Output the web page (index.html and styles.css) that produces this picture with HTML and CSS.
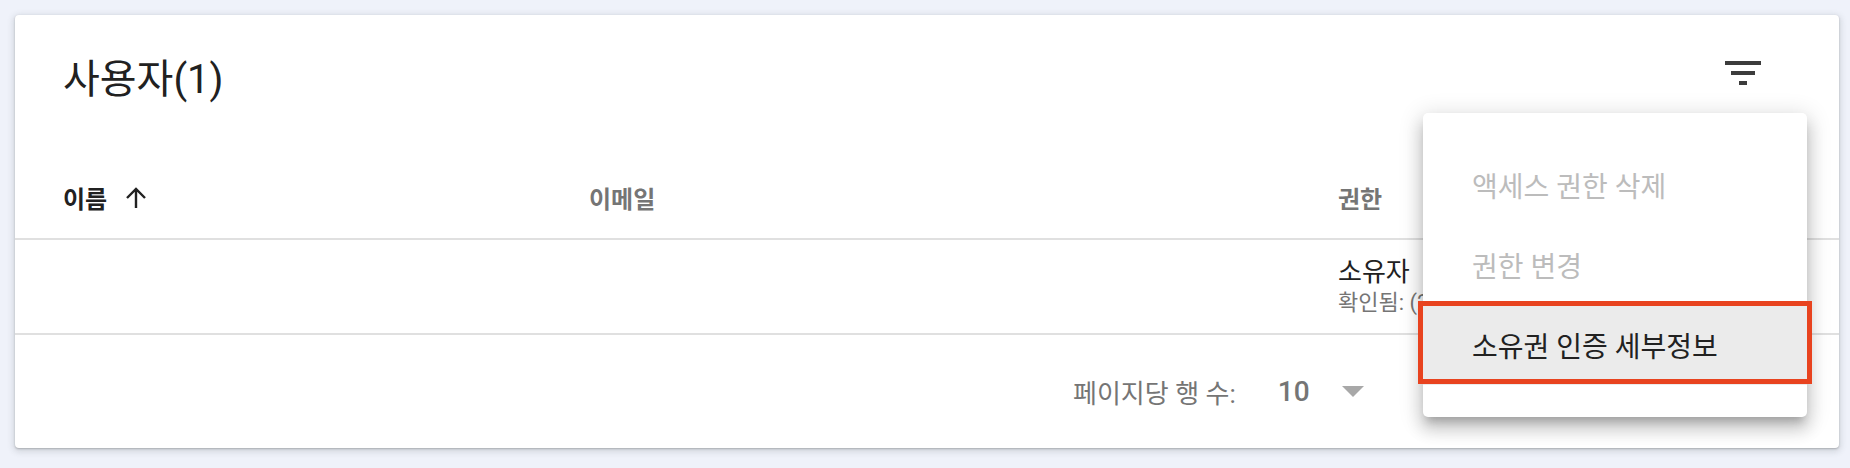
FILE: index.html
```html
<!DOCTYPE html>
<html lang="ko">
<head>
<meta charset="utf-8">
<title>사용자</title>
<link rel="stylesheet" href="styles.css">
</head>
<body>
<div class="card">
  <div class="title-row">
    <h1 class="title">사용자(1)</h1>
    <button class="filter-btn" aria-label="필터">
      <svg viewBox="0 0 24 24" width="48" height="48"><rect x="3" y="6" width="18" height="2"/><rect x="6" y="11" width="12" height="2"/><rect x="10" y="16" width="4" height="2"/></svg>
    </button>
  </div>
  <div class="table">
    <div class="row head">
      <div class="cell sorted">이름 <svg class="sort" viewBox="0 0 22 22" width="22" height="22"><path d="M11 21V2M2 11l9-9 9 9"/></svg></div>
      <div class="cell">이메일</div>
      <div class="cell">권한</div>
    </div>
    <div class="row body">
      <div class="cell"></div>
      <div class="cell"></div>
      <div class="cell">
        <div class="role">소유자</div>
        <div class="verified">확인됨: (2023. 1. 1.)</div>
      </div>
    </div>
  </div>
  <div class="footer">
    <span class="per-page">페이지당 행 수:</span>
    <span class="count">10</span>
    <span class="caret"></span>
  </div>
  <div class="menu">
    <div class="item disabled">액세스 권한 삭제</div>
    <div class="item disabled">권한 변경</div>
    <div class="item active">소유권 인증 세부정보<span class="mark"></span></div>
  </div>
</div>
</body>
</html>
```
FILE: styles.css
```css
* { box-sizing: border-box; }
html, body { margin: 0; padding: 0; }
body {
  background: #eff2fa;
  font-family: Roboto, "Noto Sans CJK KR", sans-serif;
  color: #212121;
  width: 1850px;
  height: 468px;
  overflow: hidden;
}
.card {
  position: relative;
  margin: 15px 0 0 15px;
  width: 1824px;
  height: 433px;
  background: #fff;
  border-radius: 4px;
  box-shadow: 0 1px 2px rgba(60,64,67,.3), 0 2px 6px 2px rgba(60,64,67,.15);
}
.title-row {
  display: flex;
  justify-content: space-between;
  align-items: flex-start;
  padding: 34px 72px 52px 48px;
}
.title {
  margin: 6px 0 0 0;
  font-size: 40px;
  line-height: 50px;
  font-weight: 400;
  color: #212121;
}
.filter-btn {
  width: 48px;
  height: 48px;
  padding: 0;
  border: 0;
  background: none;
}
.filter-btn svg { display: block; fill: #3c3c3c; }
.row {
  display: grid;
  grid-template-columns: 526px 749px 1fr;
  padding-left: 48px;
  border-bottom: 2px solid #e0e0e0;
}
.row.head {
  height: 83px;
  align-items: center;
  font-size: 24px;
  font-weight: 700;
  color: #757575;
}
.row.head .sorted {
  color: #212121;
  display: flex;
  align-items: center;
  gap: 18px;
}
.sort { fill: none; stroke: #212121; stroke-width: 2.4; }
.row.body {
  height: 95px;
  padding-top: 17px;
}
.role { font-size: 26px; line-height: 30px; }
.verified { font-size: 22px; line-height: 32px; color: #757575; white-space: nowrap; }
.footer {
  height: 112px;
  display: flex;
  align-items: center;
  padding-left: 1058px;
  color: #757575;
}
.per-page { font-size: 26px; }
.count { font-size: 28px; font-weight: 500; margin-left: 42px; }
.caret {
  margin-left: 32px;
  width: 0; height: 0;
  border-left: 11px solid transparent;
  border-right: 11px solid transparent;
  border-top: 11px solid #a8a8a8;
}
.menu {
  position: absolute;
  left: 1408px;
  top: 98px;
  width: 384px;
  height: 304px;
  padding: 32px 0;
  background: #fff;
  border-radius: 5px;
  box-shadow: 0 8px 8px -4px rgba(0,0,0,.2), 0 12px 16px 2px rgba(0,0,0,.14), 0 4px 22px 4px rgba(0,0,0,.12);
}
.item {
  position: relative;
  height: 80px;
  display: flex;
  align-items: center;
  padding-left: 49px;
  font-size: 28px;
}
.item.disabled { color: #bcbcbc; }
.item.active { background: #ebebeb; color: #212121; }
.mark {
  position: absolute;
  left: -5px;
  right: -5px;
  top: -4px;
  bottom: 1px;
  border: 5px solid #e8431f;
}
```
